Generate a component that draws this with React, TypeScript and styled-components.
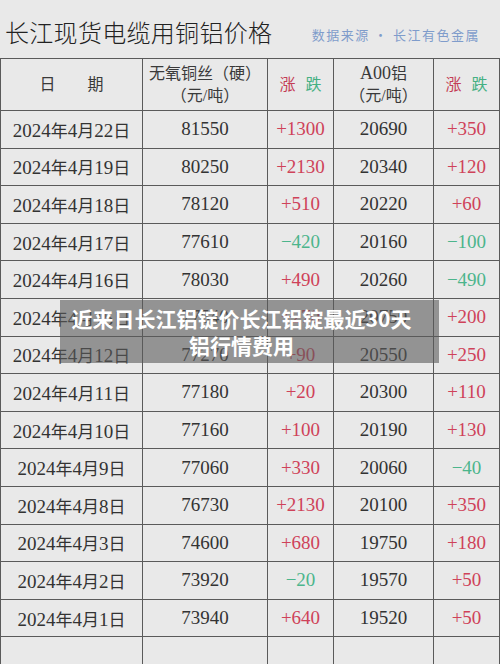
import React from 'react'
import styled, { createGlobalStyle } from 'styled-components'

const GlobalStyle = createGlobalStyle`
    html, body {
        margin: 0;
        padding: 0;
        background: #e9e9e9;
    }
    body {
        font-family: "Liberation Serif", "Noto Sans CJK SC", serif;
        overflow: hidden;
    }
`

type Row = {
    date: string
    copper: string
    copperDiff: string
    alu: string
    aluDiff: string
}

const rows: Row[] = [
    { date: '2024年4月22日', copper: '81550', copperDiff: '+1300', alu: '20690', aluDiff: '+350' },
    { date: '2024年4月19日', copper: '80250', copperDiff: '+2130', alu: '20340', aluDiff: '+120' },
    { date: '2024年4月18日', copper: '78120', copperDiff: '+510', alu: '20220', aluDiff: '+60' },
    { date: '2024年4月17日', copper: '77610', copperDiff: '−420', alu: '20160', aluDiff: '−100' },
    { date: '2024年4月16日', copper: '78030', copperDiff: '+490', alu: '20260', aluDiff: '−490' },
    { date: '2024年4月15日', copper: '77540', copperDiff: '+270', alu: '20750', aluDiff: '+200' },
    { date: '2024年4月12日', copper: '77270', copperDiff: '+90', alu: '20550', aluDiff: '+250' },
    { date: '2024年4月11日', copper: '77180', copperDiff: '+20', alu: '20300', aluDiff: '+110' },
    { date: '2024年4月10日', copper: '77160', copperDiff: '+100', alu: '20190', aluDiff: '+130' },
    { date: '2024年4月9日', copper: '77060', copperDiff: '+330', alu: '20060', aluDiff: '−40' },
    { date: '2024年4月8日', copper: '76730', copperDiff: '+2130', alu: '20100', aluDiff: '+350' },
    { date: '2024年4月3日', copper: '74600', copperDiff: '+680', alu: '19750', aluDiff: '+180' },
    { date: '2024年4月2日', copper: '73920', copperDiff: '−20', alu: '19570', aluDiff: '+50' },
    { date: '2024年4月1日', copper: '73940', copperDiff: '+640', alu: '19520', aluDiff: '+50' },
]

// digits stay in the serif face, the CJK unit chars get a slightly smaller size
const DateText = ({ value }: { value: string }) => (
    <>
        {value.split(/([年月日])/).map((part, i) =>
            /[年月日]/.test(part) ? <Unit key={i}>{part}</Unit> : part
        )}
    </>
)

const Diff = ({ value }: { value: string }) => (
    <DiffCell $up={value.startsWith('+')}>{value}</DiffCell>
)

const RiseFall = () => (
    <>
        <Rise>涨</Rise>
        <Fall>跌</Fall>
    </>
)

const App = () => {
    return (
        <Page>
            <GlobalStyle />
            <TitleBar>
                <Title>长江现货电缆用铜铝价格</Title>
                <Source>数据来源 · 长江有色金属</Source>
            </TitleBar>
            <Table>
                <colgroup>
                    <col style={{ width: 142 }} />
                    <col style={{ width: 125 }} />
                    <col style={{ width: 66 }} />
                    <col style={{ width: 100 }} />
                    <col style={{ width: 66 }} />
                </colgroup>
                <thead>
                    <HeadRow>
                        <HeadCell>
                            <Spaced>日</Spaced>期
                        </HeadCell>
                        <HeadCell>
                            无氧铜丝（硬）
                            <br />
                            （元/吨）
                        </HeadCell>
                        <HeadCell>
                            <RiseFall />
                        </HeadCell>
                        <HeadCell>
                            <Latin>A00</Latin>铝
                            <br />
                            （元/吨）
                        </HeadCell>
                        <HeadCell>
                            <RiseFall />
                        </HeadCell>
                    </HeadRow>
                </thead>
                <tbody>
                    {rows.map((r) => (
                        <BodyRow key={r.date}>
                            <Cell>
                                <DateText value={r.date} />
                            </Cell>
                            <Cell>{r.copper}</Cell>
                            <Diff value={r.copperDiff} />
                            <Cell>{r.alu}</Cell>
                            <Diff value={r.aluDiff} />
                        </BodyRow>
                    ))}
                    <BodyRow>
                        <Cell />
                        <Cell />
                        <Cell />
                        <Cell />
                        <Cell />
                    </BodyRow>
                </tbody>
            </Table>
            <Caption>近来日长江铝锭价长江铝锭最近30天铝行情费用</Caption>
        </Page>
    )
}

export default App

const Page = styled.div`
    position: relative;
    width: 500px;
    height: 664px;
    overflow: hidden;
    background: #e9e9e9;
`

const TitleBar = styled.div`
    display: flex;
    align-items: center;
    justify-content: space-between;
    height: 58px;
    padding: 0 20px 0 5px;
    box-sizing: border-box;
`

const Title = styled.div`
    font-family: "Noto Sans CJK SC", sans-serif;
    font-size: 24px;
    font-weight: 300;
    color: #222;
    letter-spacing: 0.3px;
    margin-top: 4px;
`

const Source = styled.div`
    font-family: "Noto Sans CJK SC", sans-serif;
    font-size: 13px;
    color: #7f9ccb;
    letter-spacing: 1.5px;
    margin-top: 10px;
`

const Table = styled.table`
    border-collapse: collapse;
    table-layout: fixed;
    width: 499px;
    color: #333;

    td,
    th {
        border: 1px solid #5a5a5a;
        text-align: center;
        padding: 0;
    }
`

const HeadRow = styled.tr`
    height: 52px;
`

const HeadCell = styled.th`
    font-weight: normal;
    font-size: 16px;
    line-height: 22px;
    color: #3a3a3a;
`

const Latin = styled.span`
    font-size: 18px;
`

const Spaced = styled.span`
    margin-right: 32px;
`

const Rise = styled.span`
    color: #c43c55;
    margin-right: 10px;
`

const Fall = styled.span`
    color: #45b083;
`

const BodyRow = styled.tr`
    height: 37.6px;
`

const Cell = styled.td`
    font-size: 19px;
    color: #333;
    white-space: nowrap;
`

const Unit = styled.span`
    font-size: 17px;
`

const DiffCell = styled.td<{ $up: boolean }>`
    font-size: 19px;
    color: ${(p) => (p.$up ? '#cf4259' : '#4cb58c')};
`

const Caption = styled.div`
    position: absolute;
    left: 60px;
    top: 300px;
    width: 379px;
    height: 63px;
    box-sizing: border-box;
    padding: 5px 18px 0 2px;
    background: rgba(90, 90, 90, 0.6);
    color: #fff;
    font-family: "Noto Sans CJK SC", sans-serif;
    font-weight: 700;
    font-size: 21px;
    line-height: 27px;
    text-align: center;
`
